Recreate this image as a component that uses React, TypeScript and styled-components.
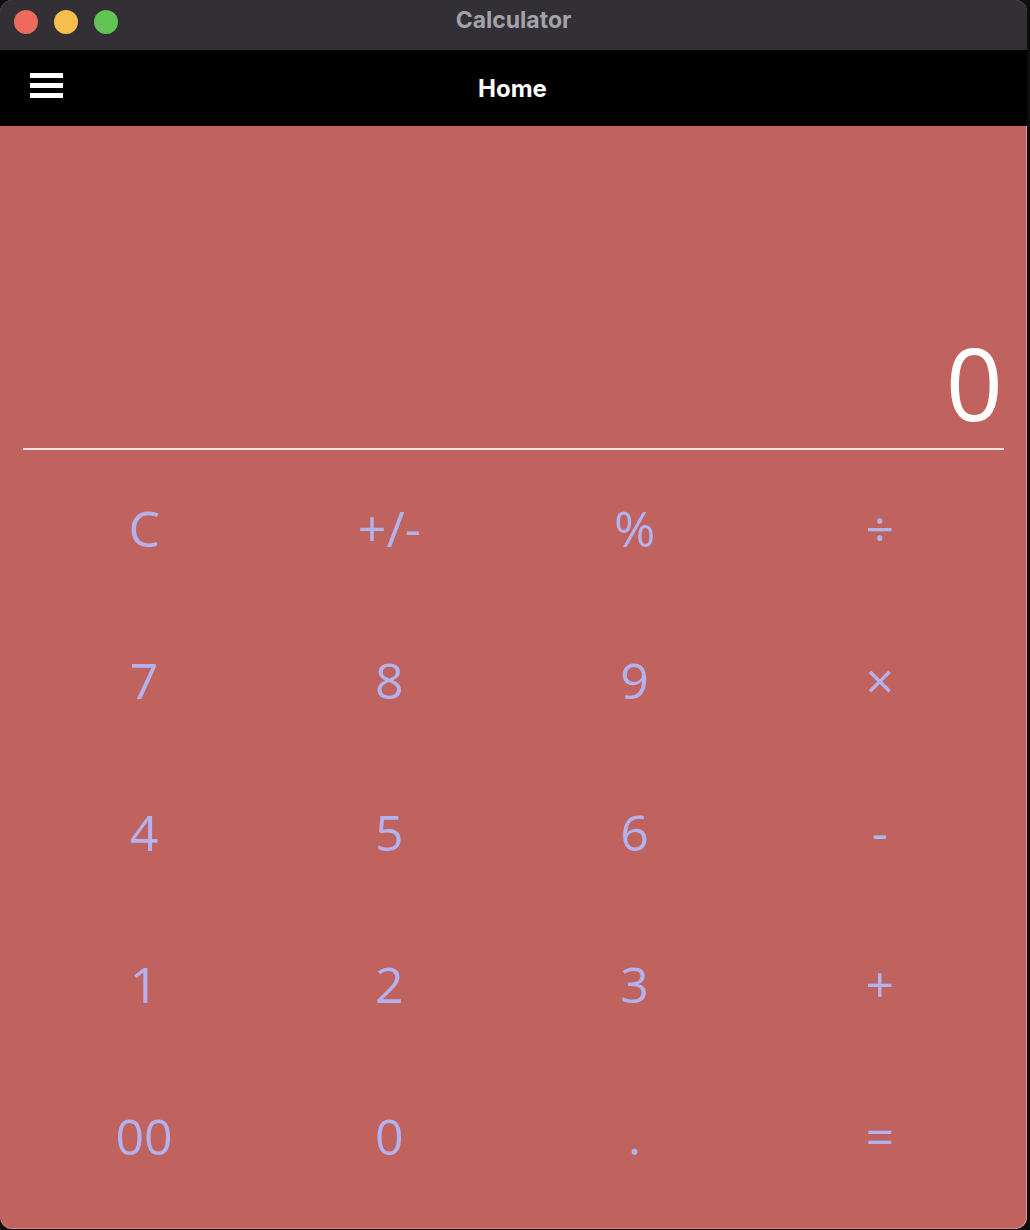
import React from "react";
import styled, { createGlobalStyle } from "styled-components";

const Global = createGlobalStyle`
  html, body { margin: 0; padding: 0; background: #0d0d0d; }
  body { width: 1030px; height: 1230px; overflow: hidden; }
  #root { width: 1030px; height: 1230px; }
`;

const Window = styled.div`
  width: 1027px;
  height: 1229px;
  border-radius: 12px;
  overflow: hidden;
  display: flex;
  flex-direction: column;
  background: #c0635f;
  box-shadow: inset -1px 0 0 rgba(255, 255, 255, 0.35), inset 0 -1px 0 rgba(255,255,255,0.25);
`;

const TitleBar = styled.div`
  height: 50px;
  flex: none;
  background: #323035;
  display: flex;
  align-items: center;
  position: relative;
  padding-left: 14px;
  gap: 16px;
`;

const Light = styled.span<{ $c: string }>`
  width: 24px;
  height: 24px;
  border-radius: 50%;
  background: ${(p) => p.$c};
  margin-top: -6px;
`;

const Title = styled.div`
  position: absolute;
  left: 0;
  right: 0;
  top: 6px;
  text-align: center;
  font-family: Inter, "Liberation Sans", sans-serif;
  font-weight: 700;
  font-size: 23px;
  color: #a4a2a9;
  pointer-events: none;
`;

const NavBar = styled.div`
  height: 76px;
  flex: none;
  background: #000;
  display: flex;
  align-items: center;
  position: relative;
`;

const Burger = styled.div`
  position: absolute;
  left: 30px;
  top: 23px;
  width: 33px;
  display: flex;
  flex-direction: column;
  gap: 5px;
`;

const BurgerBar = styled.span`
  height: 5px;
  background: #fff;
`;

const NavTitle = styled.div`
  flex: 1;
  text-align: center;
  font-family: Inter, "Liberation Sans", sans-serif;
  font-weight: 700;
  font-size: 24px;
  color: #fff;
  margin-left: -2px;
`;

const Body = styled.div`
  flex: 1;
  display: flex;
  flex-direction: column;
  padding: 0 23px;
`;

const Display = styled.div`
  height: 324px;
  flex: none;
  display: flex;
  align-items: flex-end;
  justify-content: flex-end;
  border-bottom: 2px solid #f1e3e2;
  font-family: "Open Sans", sans-serif;
  font-size: 100px;
  line-height: 1;
  color: #fff;
  padding-bottom: 16px;
  box-sizing: border-box;
`;

const DisplayText = styled.span`
  margin-right: 1px;
`;

const Keypad = styled.div`
  display: grid;
  grid-template-columns: repeat(4, 1fr);
  grid-auto-rows: 152px;
  padding-top: 2px;
`;

const Key = styled.button`
  background: transparent;
  border: none;
  padding: 0 3px 0 0;
  font-family: "Open Sans", sans-serif;
  font-size: 50px;
  color: #b4b2ee;
  display: flex;
  align-items: center;
  justify-content: center;
  cursor: pointer;
`;

const keys = [
  "C", "+/-", "%", "÷",
  "7", "8", "9", "×",
  "4", "5", "6", "-",
  "1", "2", "3", "+",
  "00", "0", ".", "=",
];

export default function App() {
  return (
    <>
      <Global />
      <Window>
        <TitleBar>
          <Light $c="#ee6a5f" />
          <Light $c="#f5be4f" />
          <Light $c="#61c454" />
          <Title>Calculator</Title>
        </TitleBar>
        <NavBar>
          <Burger>
            <BurgerBar />
            <BurgerBar />
            <BurgerBar />
          </Burger>
          <NavTitle>Home</NavTitle>
        </NavBar>
        <Body>
          <Display>
            <DisplayText>0</DisplayText>
          </Display>
          <Keypad>
            {keys.map((k) => (
              <Key key={k}>{k}</Key>
            ))}
          </Keypad>
        </Body>
      </Window>
    </>
  );
}
